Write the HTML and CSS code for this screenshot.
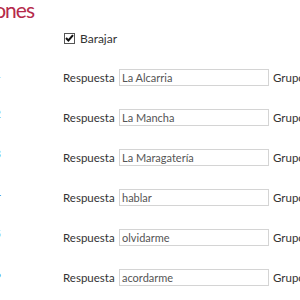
FILE: index.html
```html
<!DOCTYPE html>
<html lang="es">
<head>
    <meta charset="UTF-8">
    <meta name="viewport" content="width=device-width, initial-scale=1.0">
    <title>Opciones</title>
    <link rel="stylesheet" href="styles.css">
</head>
<body>
    <div class="page">
        <h1 class="title">Opciones</h1>
        <label class="shuffle">
            <span class="box">
                <svg width="9" height="8" viewBox="0 0 9 8"><path d="M1 4 L3.4 6.5 L8 1.2" fill="none" stroke="#111" stroke-width="2"/></svg>
            </span>
            Barajar
        </label>
        <div class="row">
            <span class="num">1</span>
            <span class="label">Respuesta</span>
            <input class="field" type="text" value="La Alcarria">
            <span class="group">Grupo</span>
        </div>
        <div class="row">
            <span class="num">2</span>
            <span class="label">Respuesta</span>
            <input class="field" type="text" value="La Mancha">
            <span class="group">Grupo</span>
        </div>
        <div class="row">
            <span class="num">3</span>
            <span class="label">Respuesta</span>
            <input class="field" type="text" value="La Maragatería">
            <span class="group">Grupo</span>
        </div>
        <div class="row">
            <span class="num">4</span>
            <span class="label">Respuesta</span>
            <input class="field" type="text" value="hablar">
            <span class="group">Grupo</span>
        </div>
        <div class="row">
            <span class="num">5</span>
            <span class="label">Respuesta</span>
            <input class="field" type="text" value="olvidarme">
            <span class="group">Grupo</span>
        </div>
        <div class="row">
            <span class="num">6</span>
            <span class="label">Respuesta</span>
            <input class="field" type="text" value="acordarme">
            <span class="group">Grupo</span>
        </div>
    </div>
</body>
</html>
```

FILE: styles.css
```css
body {
    font-family: Lato, "Noto Sans", sans-serif;
    background-color: #fff;
    color: #333;
    margin: 0;
    padding: 0;
    overflow: hidden;
}
.page {
    width: 400px;
}
.title {
    width: 200px;
    margin: -3px 0 0 -166px;
    text-align: right;
    font-size: 21px;
    font-weight: normal;
    letter-spacing: -1px;
    line-height: 26px;
    color: #b52a4b;
}
.shuffle {
    display: flex;
    align-items: center;
    gap: 5px;
    height: 16px;
    margin: 7px 0 0 64px;
    font-size: 12px;
    color: #333;
}
.box {
    display: flex;
    align-items: center;
    justify-content: center;
    width: 11px;
    height: 11px;
    box-sizing: border-box;
    border: 1px solid #555;
    background-color: #fff;
}
.row {
    display: flex;
    align-items: center;
    height: 17px;
    margin-top: 23px;
    font-size: 11.5px;
}
.num {
    width: 40px;
    margin-left: -39px;
    align-self: flex-start;
    margin-top: -3px;
    text-align: right;
    font-size: 12px;
    color: #3c7fd0;
}
.label {
    width: 56px;
    margin-left: 62px;
}
.field {
    width: 150px;
    height: 17px;
    box-sizing: border-box;
    margin: 0;
    padding: 0 2px;
    border: 1px solid #d4d4d4;
    font-family: Lato, "Noto Sans", sans-serif;
    font-size: 11px;
    color: #555;
}
.group {
    margin-left: 4px;
}
```
